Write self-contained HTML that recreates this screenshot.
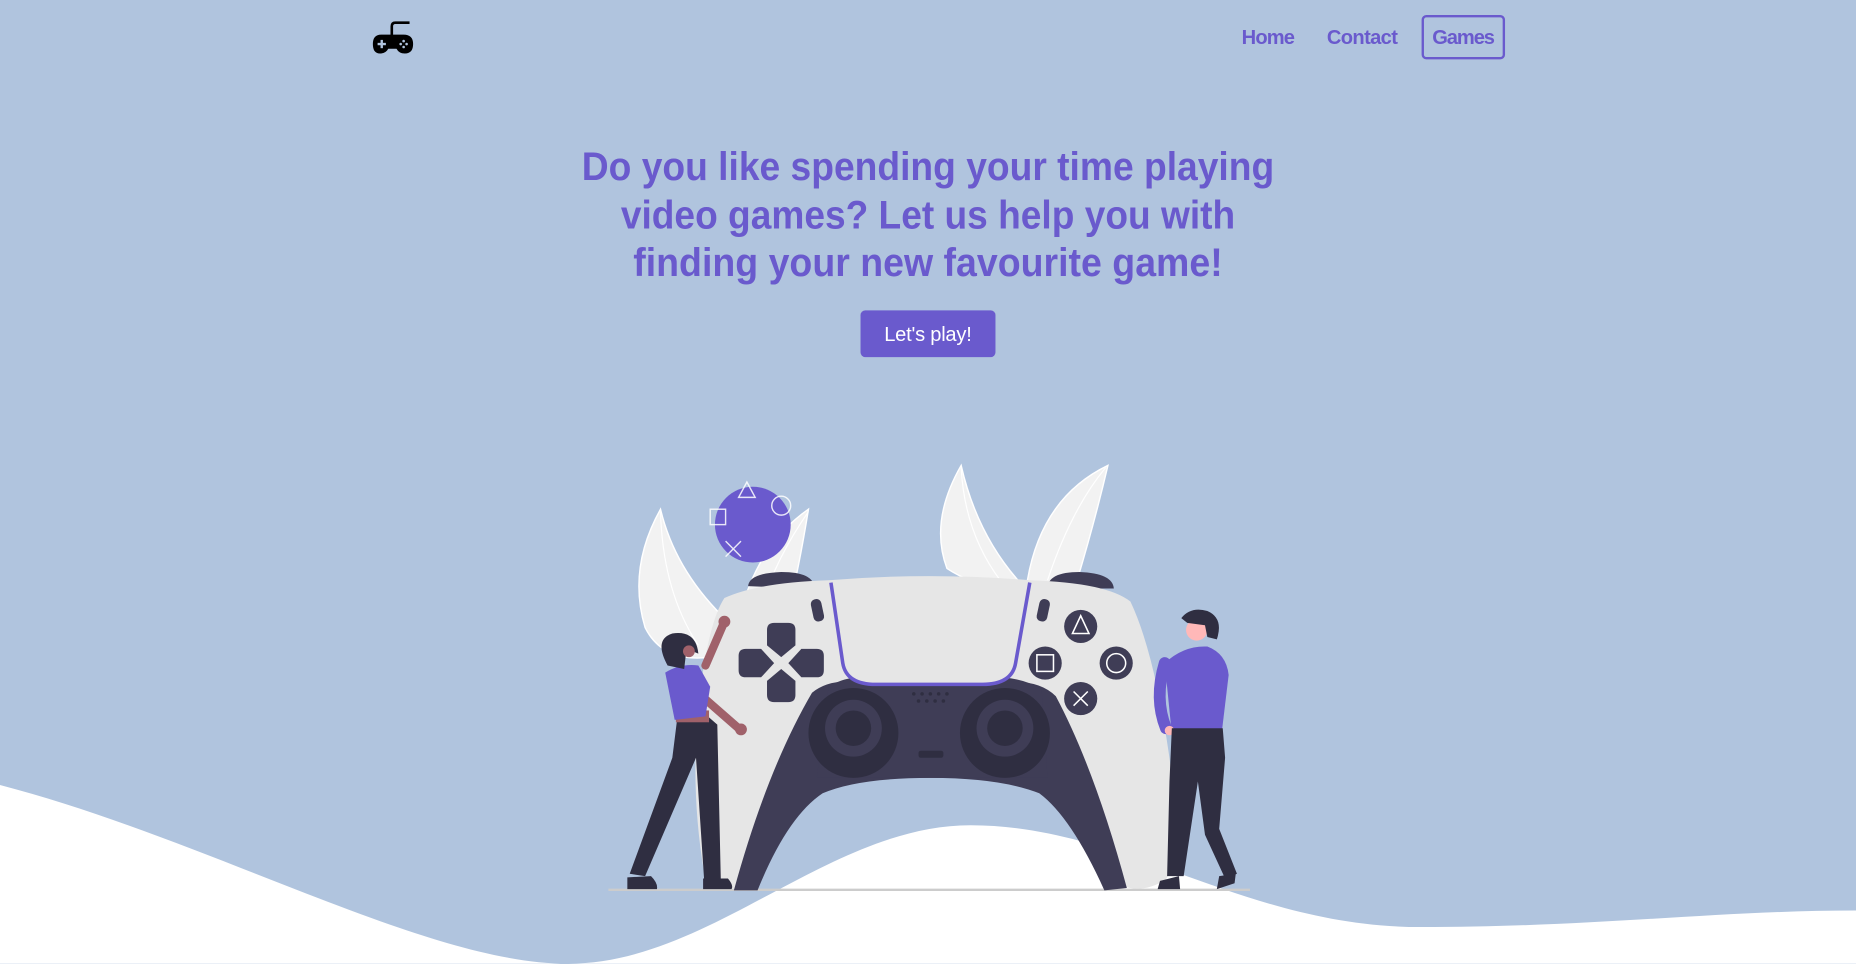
<!DOCTYPE html>
<html><head><meta charset="utf-8"><style>
html,body{margin:0;padding:0;background:#b0c4de;overflow:hidden}
svg{display:block}
</style></head><body>
<svg width="1856" height="964" viewBox="0 0 1568 814" xmlns="http://www.w3.org/2000/svg" font-family="Liberation Sans, Arial, sans-serif">
<rect width="1568" height="814" fill="#b0c4de"/>
<g fill="#000">
<path d="M331,31 L331,22 Q331,19 334,19 L346,19" stroke="#000" stroke-width="2.2" fill="none"/>
<path d="M322,29 L341,29 Q349,29 349,37 Q349,45 342,45 Q337,45 335,41 L328,41 Q326,45 321,45 Q315,45 315,37 Q315,29 322,29Z"/>
</g>
<g fill="#b0c4de"><rect x="319" y="36" width="7" height="2"/><rect x="321.5" y="33.5" width="2" height="7"/>
<circle cx="341" cy="34.5" r="1.1"/><circle cx="341" cy="39.5" r="1.1"/><circle cx="338.5" cy="37" r="1.1"/><circle cx="343.5" cy="37" r="1.1"/></g>
<g fill="#6a5acd" font-size="17" font-weight="bold">
<text x="1049" y="37" textLength="45">Home</text>
<text x="1121" y="37" textLength="60">Contact</text>
<rect x="1202" y="13.5" width="68.5" height="35.5" rx="3" fill="none" stroke="#6a5acd" stroke-width="2"/>
<text x="1210" y="37" textLength="53">Games</text>
</g>
<g fill="#6a5acd" font-size="34" font-weight="bold" text-anchor="middle">
<text x="784" y="152" textLength="585" lengthAdjust="spacingAndGlyphs">Do you like spending your time playing</text>
<text x="784" y="193" textLength="519" lengthAdjust="spacingAndGlyphs">video games? Let us help you with</text>
<text x="784" y="233" textLength="498" lengthAdjust="spacingAndGlyphs">finding your new favourite game!</text>
</g>
<rect x="727" y="262" width="114" height="39.5" rx="4" fill="#6a5acd"/>
<text x="784" y="288" fill="#fff" font-size="17" text-anchor="middle" textLength="74">Let's play!</text>
<path d="M0,663 C180,710 360,814 480,814 C600,814 700,697 820,697 C950,697 1050,783 1200,783 C1350,783 1450,769 1568,769 L1568,814 L0,814Z" fill="#fff"/>
<g fill="#f2f2f2" stroke="#fff" stroke-width="1.2">
<path d="M558,430 Q530,480 545,530 Q560,560 600,555 Q620,540 610,520 Q570,480 558,430Z"/>
<path d="M683,430 Q640,460 625,520 Q640,540 665,520 Q675,480 683,430Z"/>
<path d="M812,393 Q785,440 800,480 Q830,500 860,490 Q825,450 812,393Z"/>
<path d="M936,393 Q880,420 868,490 Q890,500 910,490 Q925,440 936,393Z"/>
</g>
<g fill="none" stroke="#fff" stroke-width="1"><path d="M558,432 Q560,500 590,545"/><path d="M683,432 Q650,480 640,525"/><path d="M812,395 Q815,450 845,490"/><path d="M934,395 Q905,430 885,490"/></g>
<circle cx="636" cy="443" r="32" fill="#6a5acd"/>
<g fill="none" stroke="#fff" stroke-width="1.2" opacity="0.85">
<path d="M631,407 L638,420 L624,420Z"/><ellipse cx="660" cy="427" rx="8" ry="8"/><rect x="600" y="430" width="13" height="13"/><path d="M613,457 L626,470 M626,457 L613,470"/></g>
<line x1="514" y1="751.5" x2="1056" y2="751.5" stroke="#ccc" stroke-width="2"/>
<path d="M632,495 Q633,484 660,483 Q688,483 688,497Z M885,497 Q885,483 912,483 Q940,484 941,497Z" fill="#3f3d56"/>
<path d="M612,505 Q640,492 700,490 Q786,483 870,490 Q935,492 955,508 Q975,550 988,640 Q998,720 985,743 Q965,755 948,748 L905,680 Q880,648 850,648 L720,648 Q690,648 665,685 L626,750 Q605,754 595,738 Q580,650 595,560 Q602,520 612,505Z" fill="#e6e6e6"/>
<path d="M686,585 Q700,574 720,576 L850,576 Q878,574 892,588 Q925,650 952,750 L933,752 Q905,690 878,670 Q845,657 786,657 Q725,657 695,670 Q665,690 640,752 L620,752 Q648,650 686,585Z" fill="#3f3d56"/>
<path d="M700,580 Q715,570 740,572 L830,572 Q860,570 880,582 L885,657 L690,657Z" fill="#3f3d56"/>
<path d="M702,492 L712,560 Q715,578 740,578 L830,578 Q855,578 858,560 L870,492" fill="#e6e6e6" stroke="#6a5acd" stroke-width="3"/>
<g><circle cx="721" cy="619" r="38" fill="#2f2e41"/><circle cx="721" cy="615" r="24" fill="#3f3d56"/><circle cx="721" cy="615" r="15" fill="#2f2e41"/>
<circle cx="849" cy="619" r="38" fill="#2f2e41"/><circle cx="849" cy="615" r="24" fill="#3f3d56"/><circle cx="849" cy="615" r="15" fill="#2f2e41"/></g>
<rect x="776" y="634" width="21" height="6" rx="2" fill="#2f2e41"/>
<g fill="#2f2e41"><circle cx="772" cy="586" r="1.5"/><circle cx="779" cy="586" r="1.5"/><circle cx="786" cy="586" r="1.5"/><circle cx="793" cy="586" r="1.5"/><circle cx="800" cy="586" r="1.5"/><circle cx="776" cy="592" r="1.5"/><circle cx="783" cy="592" r="1.5"/><circle cx="790" cy="592" r="1.5"/><circle cx="797" cy="592" r="1.5"/></g>
<rect x="686" y="506" width="9" height="19" rx="4" fill="#3f3d56" transform="rotate(-12 690 515)"/>
<rect x="877" y="506" width="9" height="19" rx="4" fill="#3f3d56" transform="rotate(12 882 515)"/>
<g fill="#3f3d56">
<path d="M654,526 L666,526 Q672,526 672,532 L672,545 L660,555 L648,545 L648,532 Q648,526 654,526Z"/>
<path d="M654,593 L666,593 Q672,593 672,587 L672,575 L660,565 L648,575 L648,587 Q648,593 654,593Z"/>
<path d="M624,554 Q624,548 630,548 L643,548 L654,560 L643,572 L630,572 Q624,572 624,566Z"/>
<path d="M696,554 Q696,548 690,548 L677,548 L666,560 L677,572 L690,572 Q696,572 696,566Z"/>
</g>
<g fill="#3f3d56"><circle cx="913" cy="529" r="14"/><circle cx="883" cy="560" r="14"/><circle cx="943" cy="560" r="14"/><circle cx="913" cy="590" r="14"/></g>
<g fill="none" stroke="#fff" stroke-width="1.3"><path d="M913,520 L920,535 L906,535Z"/><rect x="876" y="553" width="14" height="14"/><circle cx="943" cy="560" r="8"/><path d="M907,584 L919,596 M919,584 L907,596"/></g>
<path d="M596,562 L612,525" stroke="#a0616a" stroke-width="7" stroke-linecap="round"/><circle cx="612" cy="525" r="5" fill="#a0616a"/>
<path d="M593,588 L625,616" stroke="#a0616a" stroke-width="7" stroke-linecap="round"/><circle cx="626" cy="616" r="5" fill="#a0616a"/>
<path d="M572,608 L598,605 L606,612 L609,745 L595,745 L588,640 L545,740 L532,738 L568,640Z" fill="#2f2e41"/>
<rect x="571" y="600" width="28" height="10" fill="#a0616a"/>
<path d="M562,568 Q575,560 590,562 L600,580 L596,605 L570,608Z" fill="#6a5acd"/>
<path d="M564,562 Q552,540 568,535 Q588,532 590,552 L580,548 L578,565Z" fill="#2f2e41"/>
<circle cx="582" cy="550" r="5" fill="#a0616a"/>
<path d="M530,741 L550,740 Q556,746 555,751 L530,751Z M594,742 L615,742 Q620,748 618,751 L594,751Z" fill="#2f2e41"/>
<path d="M984,560 Q1000,545 1020,546 Q1036,552 1038,570 L1032,620 L990,620Z" fill="#6a5acd"/>
<path d="M984,560 Q975,590 985,615" stroke="#6a5acd" stroke-width="10" fill="none" stroke-linecap="round"/>
<circle cx="988" cy="617" r="4" fill="#ffb8b8"/>
<path d="M990,615 L1033,615 L1035,640 L1030,700 L1045,738 L1035,742 L1018,705 L1012,660 L1000,740 L986,740 L988,660Z" fill="#2f2e41"/>
<circle cx="1011" cy="532" r="9" fill="#ffb8b8"/>
<path d="M998,522 Q1006,512 1020,516 Q1034,522 1028,540 L1020,538 L1018,528 L1003,526Z" fill="#2f2e41"/>
<path d="M980,744 L996,740 L997,751 L978,751Z M1030,740 L1044,738 L1043,746 L1028,751Z" fill="#2f2e41"/>
</svg>
</body></html>
